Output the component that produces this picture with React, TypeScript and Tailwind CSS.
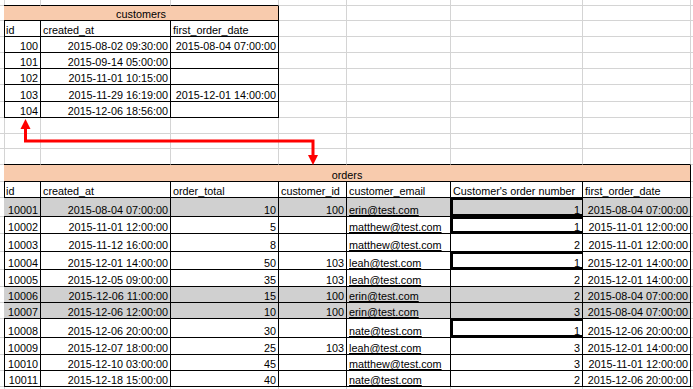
import clsx from 'clsx';

type C = {
  t?: string;
  a?: 'l' | 'r' | 'c';
  span?: 3 | 7;
  rb?: boolean; // black right border
  bb?: boolean; // black bottom border
  fill?: 'peach' | 'gray';
  link?: boolean;
  thick?: boolean;
  edge?: boolean; // last sliver column, no right border
};

type Row = { h: string; cells: C[] };

const COLS = 'grid grid-cols-[4px_37px_130px_108px_68px_104px_132px_108px_2px]';

function Cell({ c }: { c: C }) {
  return (
    <div
      className={clsx(
        'flex items-end overflow-hidden whitespace-nowrap border-b px-[2px] leading-[12px]',
        !c.edge && 'border-r',
        c.rb ? 'border-r-black' : 'border-r-[#d4d4d4]',
        c.bb ? 'border-b-black' : 'border-b-[#d4d4d4]',
        c.span === 3 && 'col-span-3',
        c.span === 7 && 'col-span-7',
        c.a === 'r' && 'justify-end',
        c.a === 'c' && 'justify-center',
        c.fill === 'peach' && 'bg-[#f8cbad]',
        c.fill === 'gray' && 'bg-[#d0d0d0]',
        c.thick && 'shadow-[inset_2px_0_0_#000,inset_0_2px_0_#000,inset_0_-2px_0_#000]'
      )}
    >
      {c.link ? <span className="underline underline-offset-[1px]">{c.t}</span> : c.t}
    </div>
  );
}

const blank = (n: number): C[] => Array.from({ length: n }, () => ({}));
const tail: C = { edge: true };

// rows sitting outside of both tables
const plain = (h: string): Row => ({ h, cells: [...blank(8), tail] });

const customers: [string, string, string][] = [
  ['100', '2015-08-02 09:30:00', '2015-08-04 07:00:00'],
  ['101', '2015-09-14 05:00:00', ''],
  ['102', '2015-11-01 10:15:00', ''],
  ['103', '2015-11-29 16:19:00', '2015-12-01 14:00:00'],
  ['104', '2015-12-06 18:56:00', ''],
];
const custH = ['h-[16px]', 'h-[16px]', 'h-[16px]', 'h-[17px]', 'h-[16px]'];

type Order = {
  id: string; at: string; total: string; cust: string; email: string;
  n: string; first: string; gray?: boolean; thick?: boolean; h: string;
};

const orders: Order[] = [
  { id: '10001', at: '2015-08-04 07:00:00', total: '10', cust: '100', email: 'erin@test.com', n: '1', first: '2015-08-04 07:00:00', gray: true, thick: true, h: 'h-[19px]' },
  { id: '10002', at: '2015-11-01 12:00:00', total: '5', cust: '', email: 'matthew@test.com', n: '1', first: '2015-11-01 12:00:00', thick: true, h: 'h-[17px]' },
  { id: '10003', at: '2015-11-12 16:00:00', total: '8', cust: '', email: 'matthew@test.com', n: '2', first: '2015-11-01 12:00:00', h: 'h-[18px]' },
  { id: '10004', at: '2015-12-01 14:00:00', total: '50', cust: '103', email: 'leah@test.com', n: '1', first: '2015-12-01 14:00:00', thick: true, h: 'h-[18px]' },
  { id: '10005', at: '2015-12-05 09:00:00', total: '35', cust: '103', email: 'leah@test.com', n: '2', first: '2015-12-01 14:00:00', h: 'h-[17px]' },
  { id: '10006', at: '2015-12-06 11:00:00', total: '15', cust: '100', email: 'erin@test.com', n: '2', first: '2015-08-04 07:00:00', gray: true, h: 'h-[16px]' },
  { id: '10007', at: '2015-12-06 12:00:00', total: '10', cust: '100', email: 'erin@test.com', n: '3', first: '2015-08-04 07:00:00', gray: true, h: 'h-[16px]' },
  { id: '10008', at: '2015-12-06 20:00:00', total: '30', cust: '', email: 'nate@test.com', n: '1', first: '2015-12-06 20:00:00', thick: true, h: 'h-[19px]' },
  { id: '10009', at: '2015-12-07 18:00:00', total: '25', cust: '103', email: 'leah@test.com', n: '3', first: '2015-12-01 14:00:00', h: 'h-[17px]' },
  { id: '10010', at: '2015-12-10 03:00:00', total: '45', cust: '', email: 'matthew@test.com', n: '3', first: '2015-11-01 12:00:00', h: 'h-[16px]' },
  { id: '10011', at: '2015-12-18 15:00:00', total: '40', cust: '', email: 'nate@test.com', n: '2', first: '2015-12-06 20:00:00', h: 'h-[16px]' },
];

const T = { rb: true, bb: true };

const rows: Row[] = [
  { h: 'h-[6px]', cells: [{}, { bb: true }, { bb: true }, { bb: true }, ...blank(4), tail] },
  { h: 'h-[15px]', cells: [{ rb: true }, { ...T, span: 3, a: 'c', fill: 'peach', t: 'customers' }, ...blank(4), tail] },
  {
    h: 'h-[16px]',
    cells: [{ rb: true }, { ...T, t: 'id' }, { ...T, t: 'created_at' }, { ...T, t: 'first_order_date' }, ...blank(4), tail],
  },
  ...customers.map((r, i): Row => ({
    h: custH[i],
    cells: [
      { rb: true },
      { ...T, a: 'r', t: r[0] },
      { ...T, a: 'r', t: r[1] },
      { ...T, a: 'r', t: r[2] },
      ...blank(4),
      tail,
    ],
  })),
  plain('h-[16px]'),
  plain('h-[15px]'),
  { h: 'h-[16px]', cells: [{}, ...Array.from({ length: 7 }, () => ({ bb: true })), tail] },
  { h: 'h-[17px]', cells: [{ rb: true }, { ...T, span: 7, a: 'c', fill: 'peach', t: 'orders' }, tail] },
  {
    h: 'h-[16px]',
    cells: [
      { rb: true },
      { ...T, t: 'id' },
      { ...T, t: 'created_at' },
      { ...T, t: 'order_total' },
      { ...T, t: 'customer_id' },
      { ...T, t: 'customer_email' },
      { ...T, t: "Customer's order number" },
      { ...T, t: 'first_order_date' },
      tail,
    ],
  },
  ...orders.map((o): Row => {
    const fill = o.gray ? ('gray' as const) : undefined;
    return {
      h: o.h,
      cells: [
        { rb: true },
        { ...T, fill, a: 'r', t: o.id },
        { ...T, fill, a: 'r', t: o.at },
        { ...T, fill, a: 'r', t: o.total },
        { ...T, fill, a: 'r', t: o.cust },
        { ...T, fill, link: true, t: o.email },
        { ...T, fill, a: 'r', t: o.n, thick: o.thick },
        { ...T, fill, a: 'r', t: o.first },
        tail,
      ],
    };
  }),
  plain('h-[3px]'),
];

export default function App() {
  return (
    <div className="relative h-[389px] w-[693px] overflow-hidden bg-white font-['Liberation_Sans',Arial,sans-serif] text-[10.8px] text-black">
      {rows.map((r, i) => (
        <div key={i} className={clsx(COLS, r.h)}>
          {r.cells.map((c, j) => (
            <Cell key={j} c={c} />
          ))}
        </div>
      ))}

      {/* red link arrow between the two tables */}
      <svg className="pointer-events-none absolute inset-0" width={693} height={389} viewBox="0 0 693 389">
        <path d="M25.5 128 V141 H313 V156" fill="none" stroke="#f00" strokeWidth={3} />
        <polygon points="20.5,129 30.5,129 25.5,119" fill="#f00" />
        <polygon points="308,155 318,155 313,165" fill="#f00" />
      </svg>
    </div>
  );
}
